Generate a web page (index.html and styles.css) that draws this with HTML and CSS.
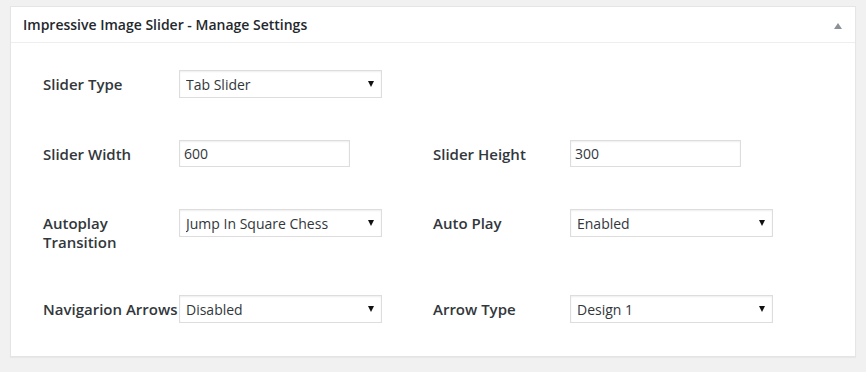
FILE: index.html
```html
<!DOCTYPE html>
<html lang="en">
<head>
    <meta charset="UTF-8">
    <meta name="viewport" content="width=device-width, initial-scale=1.0">
    <title>Impressive Image Slider - Manage Settings</title>
    <link rel="stylesheet" href="styles.css">
</head>
<body>

    <div class="postbox">
        <div class="postbox-header">
            <h2>Impressive Image Slider - Manage Settings</h2>
            <span class="toggle-arrow"></span>
        </div>
        <div class="settings">
            <label class="field-label">Slider Type</label>
            <span class="select-wrap">
                <select>
                    <option>Tab Slider</option>
                </select>
            </span>
            <span></span>
            <span></span>

            <label class="field-label">Slider Width</label>
            <input class="text-input" type="text" value="600">
            <label class="field-label">Slider Height</label>
            <input class="text-input" type="text" value="300">

            <label class="field-label">Autoplay<br>Transition</label>
            <span class="select-wrap">
                <select>
                    <option>Jump In Square Chess</option>
                </select>
            </span>
            <label class="field-label">Auto Play</label>
            <span class="select-wrap">
                <select>
                    <option>Enabled</option>
                </select>
            </span>

            <label class="field-label nowrap">Navigarion Arrows</label>
            <span class="select-wrap">
                <select>
                    <option>Disabled</option>
                </select>
            </span>
            <label class="field-label">Arrow Type</label>
            <span class="select-wrap">
                <select>
                    <option>Design 1</option>
                </select>
            </span>
        </div>
    </div>

</body>
</html>
```

FILE: styles.css
```css
body {
    margin: 0;
    padding: 6px 10px 15px;
    background-color: #f1f1f1;
    font-family: 'Open Sans', 'Liberation Sans', sans-serif;
    color: #23282d;
}

.postbox {
    background-color: #fff;
    border: 1px solid #e5e5e5;
    box-shadow: 0 1px 1px rgba(0, 0, 0, 0.04);
}

.postbox-header {
    display: flex;
    justify-content: space-between;
    align-items: center;
    padding: 8px 13px 8px 12px;
    border-bottom: 1px solid #eee;
}

.postbox-header h2 {
    margin: 0;
    font-size: 14px;
    font-weight: 600;
    line-height: 19px;
}

/* collapse arrow */
.toggle-arrow {
    width: 0;
    height: 0;
    border-left: 4px solid transparent;
    border-right: 4px solid transparent;
    border-bottom: 6px solid #8c9196;
    margin-top: 2px;
}

.settings {
    display: grid;
    grid-template-columns: 136px 254px 137px 203px;
    row-gap: 42px;
    padding: 27px 32px 33px;
}

.field-label {
    font-size: 15px;
    font-weight: 600;
    line-height: 19px;
    padding: 5px 0 1px;
    color: #32373c;
}

.nowrap {
    white-space: nowrap;
}

.select-wrap {
    position: relative;
    width: 203px;
    height: 28px;
}

.select-wrap select {
    appearance: none;
    -webkit-appearance: none;
    width: 100%;
    height: 28px;
    margin: 0;
    padding: 0 20px 0 6px;
    border: 1px solid #ddd;
    border-radius: 0;
    background-color: #fff;
    box-shadow: inset 0 1px 2px rgba(0, 0, 0, 0.07);
    font-family: 'Open Sans', 'Liberation Sans', sans-serif;
    font-size: 14px;
    color: #32373c;
}

/* select dropdown arrow */
.select-wrap::after {
    content: '';
    position: absolute;
    right: 8px;
    top: 11px;
    border-left: 3px solid transparent;
    border-right: 3px solid transparent;
    border-top: 6px solid #111;
    pointer-events: none;
}

.text-input {
    box-sizing: border-box;
    width: 171px;
    height: 27px;
    margin: 0;
    padding: 0 4px;
    border: 1px solid #ddd;
    box-shadow: inset 0 1px 2px rgba(0, 0, 0, 0.07);
    font-family: 'Open Sans', 'Liberation Sans', sans-serif;
    font-size: 14px;
    color: #32373c;
}
```
